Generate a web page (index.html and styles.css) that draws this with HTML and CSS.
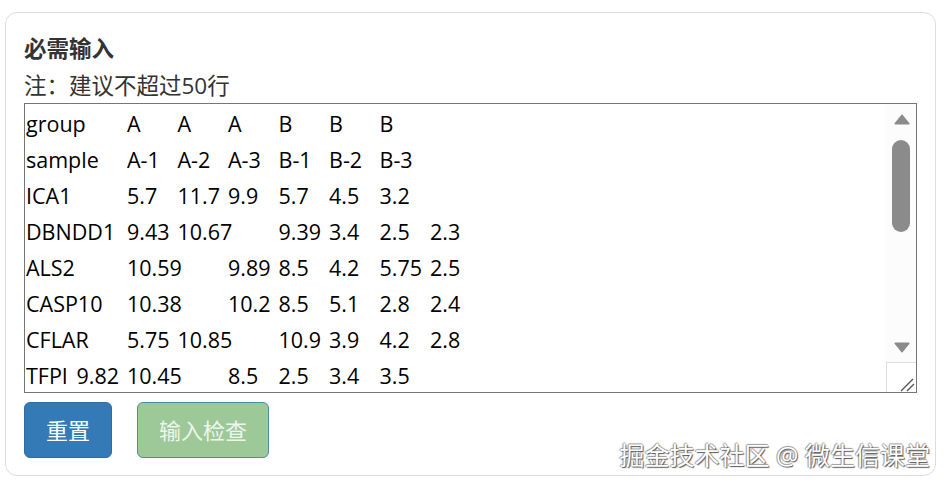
FILE: index.html
```html
<!DOCTYPE html>
<html lang="zh-CN">

<head>
    <meta charset="UTF-8">
    <title>必需输入</title>
    <link rel="stylesheet" href="styles.css">
</head>

<body>
    <div class="panel">
        <h3 class="panel-title">必需输入</h3>
        <p class="note">注：建议不超过50行</p>
        <div class="input-wrap">
            <textarea class="data-input" spellcheck="false">group	A	A	A	B	B	B
sample	A-1	A-2	A-3	B-1	B-2	B-3
ICA1		5.7	11.7	9.9	5.7	4.5	3.2
DBNDD1	9.43	10.67	9.39	3.4	2.5	2.3
ALS2	10.59	9.89	8.5	4.2	5.75	2.5
CASP10	10.38	10.2	8.5	5.1	2.8	2.4
CFLAR	5.75	10.85	10.9	3.9	4.2	2.8
TFPI	9.82	10.45	8.5	2.5	3.4	3.5
BCL2L1	8.12	9.3	7.4	3.1	2.9	3.3
TNFRSF10B	6.4	7.9	6.8	3.2	4.1	2.7
CASP8	9.1	8.75	9.2	4.4	3.8	3.1
FADD	7.65	8.2	7.9	2.9	3.3	2.6
BID	6.9	7.1	6.55	3.6	2.8	3.0
XIAP	8.8	9.05	8.4	4.0	3.7	3.9
BIRC2	7.3	7.8	7.15	3.5	3.2	2.9</textarea>
            <!-- 截图环境不显示原生滚动条，这里画一个 -->
            <div class="scrollbar">
                <div class="sb-btn">
                    <svg width="16" height="11" viewBox="0 0 16 11"><path d="M8 1.2 L14.8 9.8 H1.2 Z" fill="#8b8b8b" stroke="#8b8b8b" stroke-width="1.5" stroke-linejoin="round"/></svg>
                </div>
                <div class="sb-track">
                    <div class="sb-thumb"></div>
                </div>
                <div class="sb-btn">
                    <svg width="16" height="11" viewBox="0 0 16 11"><path d="M8 9.8 L14.8 1.2 H1.2 Z" fill="#8b8b8b" stroke="#8b8b8b" stroke-width="1.5" stroke-linejoin="round"/></svg>
                </div>
                <div class="sb-corner">
                    <svg width="29" height="29" viewBox="0 0 29 29"><path d="M14 28 L26 16 M20 28 L27 21" stroke="#555" stroke-width="1.4" fill="none"/></svg>
                </div>
            </div>
        </div>
        <div class="actions">
            <button type="button" class="btn btn-primary">重置</button>
            <button type="button" class="btn btn-success" disabled>输入检查</button>
        </div>
        <span class="watermark">掘金技术社区 @ 微生信课堂</span>
    </div>
</body>

</html>
```

FILE: styles.css
```css
body {
    margin: 0;
    background: #fff;
    color: #333;
    font-family: "Open Sans", "Noto Sans CJK SC", sans-serif;
}

/* 外层面板 */
.panel {
    position: relative;
    margin: 12px 11px 11px 5px;
    padding: 19px 18px 17px;
    border: 1px solid #ddd;
    border-radius: 12px;
}

.panel-title {
    margin: 0 0 4px;
    font-size: 22.5px;
    font-weight: bold;
    line-height: 33px;
}

.note {
    margin: 0;
    font-size: 22.5px;
    line-height: 34px;
}

/* 数据输入框 */
.input-wrap {
    position: relative;
}

.data-input {
    display: block;
    box-sizing: border-box;
    width: 100%;
    height: 290px;
    margin: 0;
    padding: 2px 31px 2px 1px;
    border: 1px solid #767676;
    border-radius: 0;
    color: #000;
    font-family: "Open Sans", "Noto Sans CJK SC", sans-serif;
    font-size: 21.5px;
    line-height: 36px;
    tab-size: 50.5px;
    white-space: pre;
    overflow: hidden;
    scrollbar-width: none;
    resize: none;
    outline: none;
}

.scrollbar {
    position: absolute;
    top: 1px;
    right: 1px;
    bottom: 1px;
    width: 30px;
    display: flex;
    flex-direction: column;
    background: #fcfcfc;
}

.sb-btn {
    height: 30px;
    display: flex;
    align-items: center;
    justify-content: center;
}

.sb-btn svg {
    display: block;
    margin-left: 1px;
}

.sb-track {
    flex: 1;
    padding: 6px;
}

.sb-thumb {
    height: 92px;
    border-radius: 9px;
    background: #8b8b8b;
}

.sb-corner {
    height: 30px;
    box-sizing: border-box;
    border-top: 1px solid #ddd;
    border-left: 1px solid #ddd;
    background: #fff;
}

.sb-corner svg {
    display: block;
}

/* 按钮 */
.actions {
    display: flex;
    gap: 25px;
    margin-top: 9px;
}

.btn {
    height: 56px;
    padding: 0 21px;
    border: 1px solid transparent;
    border-radius: 6px;
    color: #fff;
    font-family: "Open Sans", "Noto Sans CJK SC", sans-serif;
    font-size: 22px;
    line-height: 1;
    cursor: pointer;
}

.btn-primary {
    background: #337ab7;
    border-color: #2e6da4;
}

.btn-success {
    background: #9dc999;
    border-color: #4f8f98;
    color: #eef6ec;
}

.btn-success:disabled {
    cursor: not-allowed;
}

/* 右下角水印 */
.watermark {
    position: absolute;
    right: 5px;
    bottom: 4px;
    color: #fff;
    font-size: 25px;
    line-height: 32px;
    text-shadow: 1px 1px 1px #555, -1px 0 1px #999, 0 -1px 1px #999;
}
```
